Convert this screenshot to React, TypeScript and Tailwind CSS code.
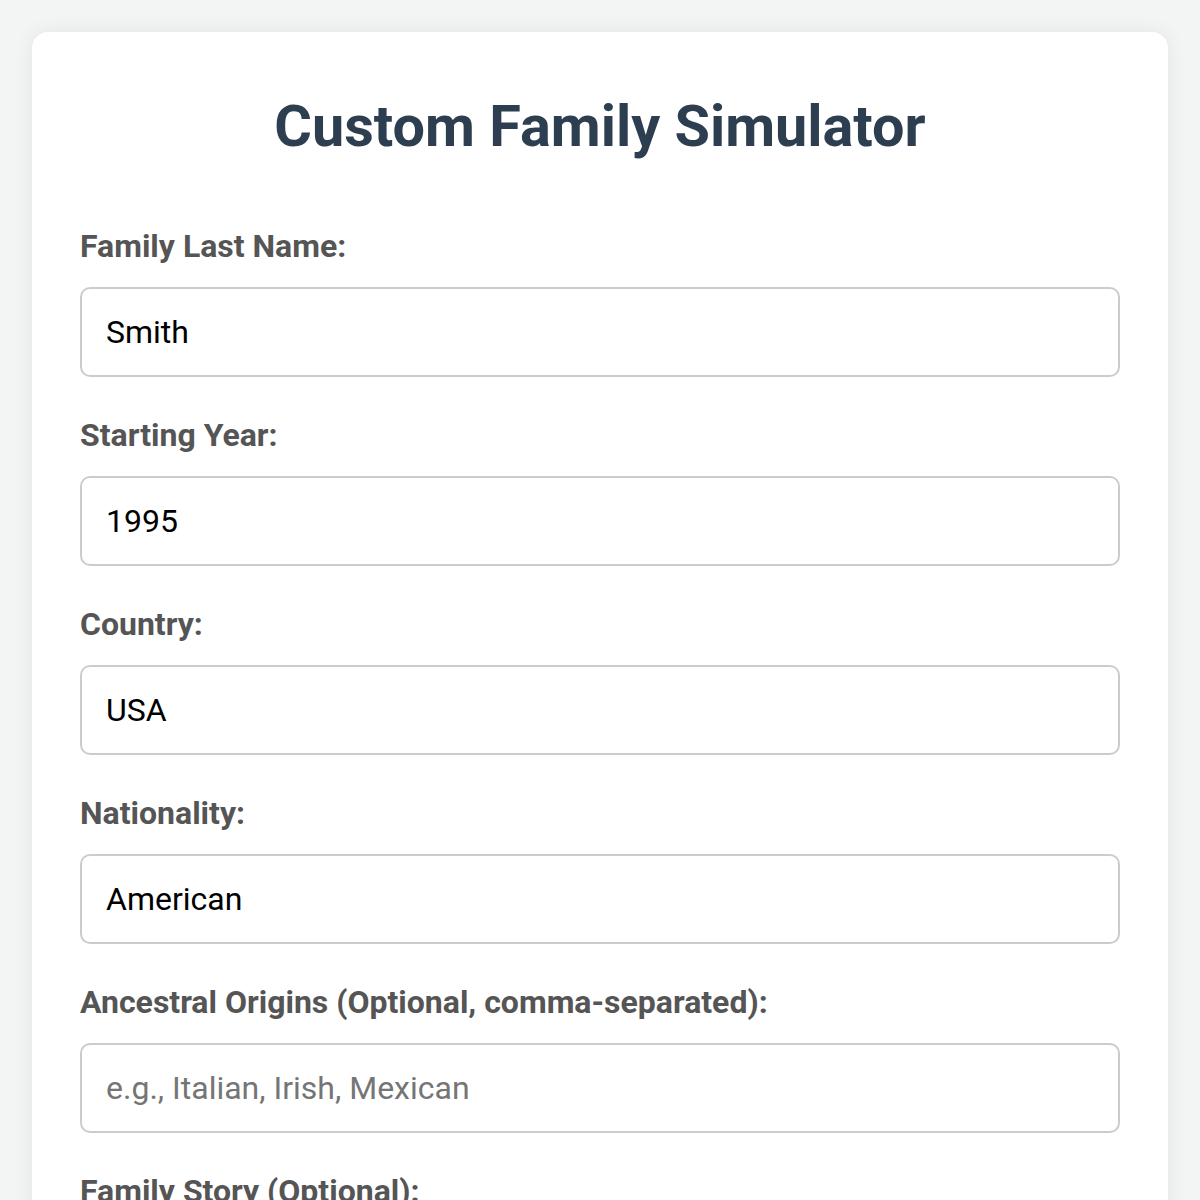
import React, { useState } from 'react';

const fields = [
  { id: 'lastName', label: 'Family Last Name:', value: 'Smith', placeholder: '' },
  { id: 'startYear', label: 'Starting Year:', value: '1995', placeholder: '' },
  { id: 'country', label: 'Country:', value: 'USA', placeholder: '' },
  { id: 'nationality', label: 'Nationality:', value: 'American', placeholder: '' },
  {
    id: 'origins',
    label: 'Ancestral Origins (Optional, comma-separated):',
    value: '',
    placeholder: 'e.g., Italian, Irish, Mexican',
  },
];

export default function App() {
  const [values, setValues] = useState<Record<string, string>>(
    Object.fromEntries(fields.map((f) => [f.id, f.value]))
  );
  const [story, setStory] = useState('');

  return (
    <div className="min-h-screen bg-[#f3f5f4] p-[32px] font-['Roboto',sans-serif]">
      <div className="bg-white rounded-[16px] shadow-[0_0_20px_rgba(0,0,0,0.07)] px-[48px] pt-[61px] pb-[48px]">
        {/* Title */}
        <h1 className="text-center text-[57.6px] font-bold leading-[67px] text-[#2c3e50] mb-[67px]">
          Custom Family Simulator
        </h1>

        {/* Form fields */}
        <div className="flex flex-col gap-[39px]">
          {fields.map((f) => (
            <div key={f.id}>
              <label
                htmlFor={f.id}
                className="block text-[32px] font-bold leading-[38px] text-[#555] mb-[22px]"
              >
                {f.label}
              </label>
              <input
                id={f.id}
                type="text"
                value={values[f.id]}
                placeholder={f.placeholder}
                onChange={(e) => setValues({ ...values, [f.id]: e.target.value })}
                className="block w-full h-[90px] border-2 border-[#ccc] rounded-[10px] px-[24px] text-[32px] text-black placeholder:text-[#757575] outline-none"
              />
            </div>
          ))}

          <div>
            <label
              htmlFor="story"
              className="block text-[32px] font-bold leading-[38px] text-[#555] mb-[22px]"
            >
              Family Story (Optional):
            </label>
            <textarea
              id="story"
              value={story}
              onChange={(e) => setStory(e.target.value)}
              rows={4}
              className="block w-full border-2 border-[#ccc] rounded-[10px] px-[24px] py-[24px] text-[32px] outline-none resize-y"
            />
          </div>
        </div>
      </div>
    </div>
  );
}
